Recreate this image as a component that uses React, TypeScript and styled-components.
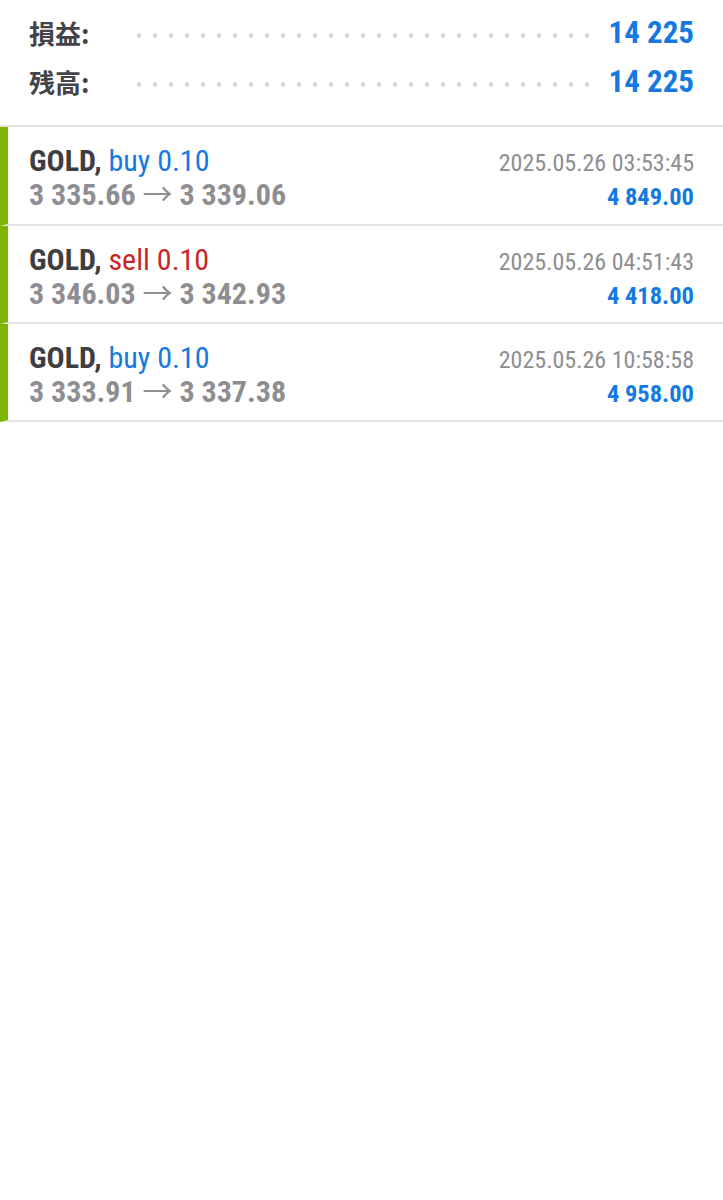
import styled, { createGlobalStyle } from 'styled-components';

const GlobalStyle = createGlobalStyle`
  body {
    margin: 0;
    background: #ffffff;
    font-family: Roboto, "Noto Sans CJK JP", sans-serif;
  }
`;

interface Trade {
  symbol: string;
  side: 'buy' | 'sell';
  volume: string;
  openPrice: string;
  closePrice: string;
  time: string;
  profit: string;
}

const trades: Trade[] = [
  { symbol: 'GOLD', side: 'buy', volume: '0.10', openPrice: '3 335.66', closePrice: '3 339.06', time: '2025.05.26 03:53:45', profit: '4 849.00' },
  { symbol: 'GOLD', side: 'sell', volume: '0.10', openPrice: '3 346.03', closePrice: '3 342.93', time: '2025.05.26 04:51:43', profit: '4 418.00' },
  { symbol: 'GOLD', side: 'buy', volume: '0.10', openPrice: '3 333.91', closePrice: '3 337.38', time: '2025.05.26 10:58:58', profit: '4 958.00' },
];

const summary = [
  { label: '損益:', value: '14 225' },
  { label: '残高:', value: '14 225' },
];

const App = () => {
  return (
    <Page>
      <GlobalStyle />
      <Summary>
        {summary.map((s) => (
          <SummaryRow key={s.label}>
            <Label>{s.label}</Label>
            <Dots />
            <Total>{s.value}</Total>
          </SummaryRow>
        ))}
      </Summary>
      <List>
        {trades.map((t) => (
          <TradeRow key={t.time}>
            <div className="trade-left">
              <p className="trade-title">
                <b>{t.symbol},</b> <Side side={t.side}>{t.side} {t.volume}</Side>
              </p>
              <p className="trade-prices">
                {t.openPrice} <span className="arrow">→</span> {t.closePrice}
              </p>
            </div>
            <div className="trade-right">
              <p className="trade-time">{t.time}</p>
              <p className="trade-profit">{t.profit}</p>
            </div>
          </TradeRow>
        ))}
      </List>
    </Page>
  );
};

export default App;

const Page = styled.div`
  width: 723px;
  min-height: 1200px;
  background: #ffffff;
  font-stretch: condensed;
`;

const Summary = styled.section`
  display: flex;
  flex-direction: column;
  gap: 13px;
  padding: 14px 29px 26px 29px;
  border-bottom: 2px solid #e2e2e2;
`;

const SummaryRow = styled.div`
  display: flex;
  align-items: center;
  height: 36px;
`;

const Label = styled.span`
  width: 102px;
  font-family: "Noto Sans CJK JP", sans-serif;
  font-size: 26px;
  font-weight: 700;
  color: #444448;
`;

const Dots = styled.span`
  flex: 1;
  height: 5px;
  margin: 6px 18px 0 0;
  background-image: radial-gradient(circle, #d6d6d6 2.1px, transparent 2.6px);
  background-size: 16px 5px;
  background-position: 0 0;
`;

const Total = styled.span`
  font-size: 31px;
  font-weight: 700;
  color: #1479e0;
`;

const List = styled.div`
  display: flex;
  flex-direction: column;
`;

const TradeRow = styled.article`
  display: flex;
  justify-content: space-between;
  height: 96px;
  padding: 0 29px 0 21px;
  border-left: 8px solid #7db600;
  border-bottom: 2px solid #e2e2e2;

  &:first-child {
    height: 97px;
  }

  p {
    margin: 0;
    white-space: nowrap;
  }

  .trade-left {
    display: flex;
    flex-direction: column;
    padding-top: 17px;
  }

  .trade-title {
    font-size: 30px;
    line-height: 34px;
    color: #3e3e42;

    b {
      font-weight: 700;
    }
  }

  .trade-prices {
    font-size: 30px;
    line-height: 34px;
    font-weight: 700;
    color: #8e8e92;

    .arrow {
      font-weight: 400;
    }
  }

  .trade-right {
    display: flex;
    flex-direction: column;
    align-items: flex-end;
    padding-top: 19px;
  }

  .trade-time {
    font-size: 24px;
    line-height: 34px;
    color: #8e8e92;
  }

  .trade-profit {
    font-size: 24.5px;
    line-height: 34px;
    font-weight: 700;
    color: #1479e0;
  }
`;

const Side = styled.span<{ side: 'buy' | 'sell' }>`
  color: ${({ side }) => (side === 'buy' ? '#1479e0' : '#c62828')};
`;
